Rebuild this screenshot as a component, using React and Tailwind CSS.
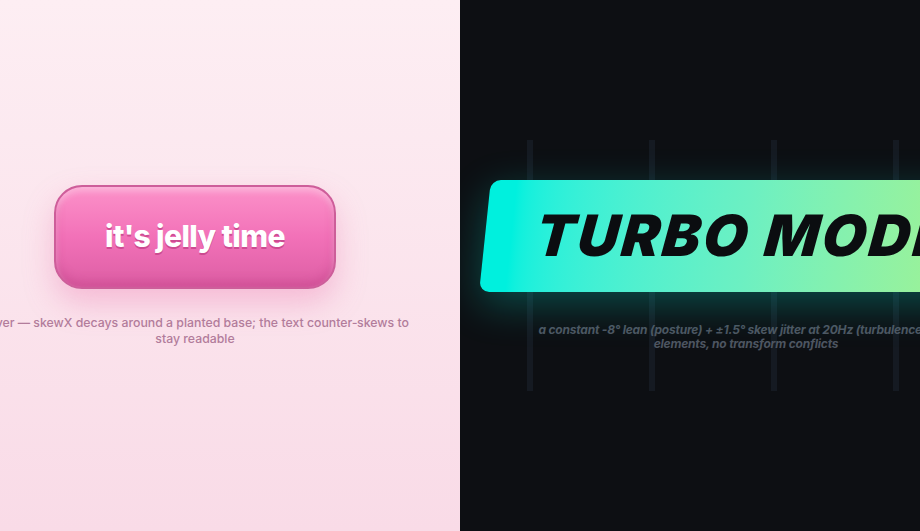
import React from 'react';

// Two demo panels: a squishy jelly button and a skewed turbo button
const JellyPanel = () => (
  <div className="relative flex h-full w-[460px] shrink-0 items-center justify-center overflow-hidden bg-gradient-to-b from-[#fdeef3] to-[#f9dbe7] pr-[70px]">
    <div className="flex w-[440px] shrink-0 flex-col items-center">
      <button className="flex h-[104px] w-[282px] items-center justify-center rounded-[28px] border-2 border-[#cd5e9a] bg-gradient-to-b from-[#fc91c9] via-[#f271b8] to-[#dd5ea4] shadow-[inset_0_4px_6px_rgba(255,255,255,0.35),inset_0_-6px_10px_rgba(170,40,110,0.25),0_14px_30px_rgba(236,110,170,0.35)]">
        <span className="text-[30px] font-extrabold tracking-[-0.02em] text-white [font-family:Inter,'Noto_Sans',sans-serif] [text-shadow:0_2px_0_rgba(190,60,130,0.7)]">
          it's jelly time
        </span>
      </button>
      <p className="mt-[26px] text-center text-[12.3px] font-medium leading-[16px] text-[#b27c9b] [font-family:Inter,'Noto_Sans',sans-serif]">
        hover — skewX decays around a planted base; the text counter&#8209;skews to stay readable
      </p>
    </div>
  </div>
);

const TurboPanel = () => (
  <div className="relative flex h-full w-[460px] shrink-0 items-center justify-center overflow-hidden bg-[#0d0f13] pl-[112px]">
    {/* speed lines behind the button */}
    <div className="absolute left-[67px] top-[140px] flex gap-[116px]">
      <div className="h-[251px] w-[6px] bg-[#151a22]" />
      <div className="h-[251px] w-[6px] bg-[#151a22]" />
      <div className="h-[251px] w-[6px] bg-[#151a22]" />
      <div className="h-[251px] w-[6px] bg-[#151a22]" />
    </div>
    <div className="relative flex w-[522px] shrink-0 flex-col items-center">
      <button className="flex h-[112px] w-[522px] -skew-x-[6deg] items-center justify-center rounded-[10px] bg-gradient-to-r from-[#00f0de] from-[5%] via-[#6cf0c2] to-[#a8f288] shadow-[0_12px_40px_rgba(0,220,200,0.3)]">
        <span className="ml-[-4px] text-[57px] font-black italic tracking-[0.05em] text-[#0b0d10] [font-family:Inter,'Noto_Sans',sans-serif]">
          TURBO MODE
        </span>
      </button>
      <p className="mt-[31px] w-[430px] text-center text-[12px] font-bold italic leading-[14px] tracking-[-0.2px] text-[#4e5561] [font-family:Inter,'Noto_Sans',sans-serif]">
        a constant -8° lean (posture) + ±1.5° skew jitter at 20Hz (turbulence), two elements, no transform conflicts
      </p>
    </div>
  </div>
);

export default function App() {
  return (
    <div className="flex h-[531px] w-[920px] overflow-hidden">
      <JellyPanel />
      <TurboPanel />
    </div>
  );
}
